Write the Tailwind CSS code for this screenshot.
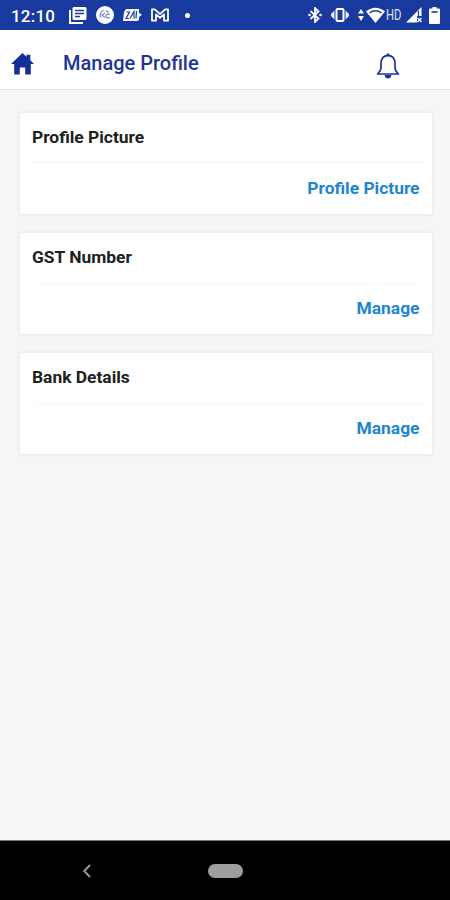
<!DOCTYPE html>
<html lang="en">
<head>
<meta charset="utf-8">
<title>Manage Profile</title>
<script src="https://cdn.jsdelivr.net/npm/@tailwindcss/browser@4"></script>
</head>
<body class="flex h-[900px] w-[450px] flex-col overflow-hidden bg-[#f6f6f6] font-[Roboto,sans-serif]">
<div class="flex h-[30px] shrink-0 items-center bg-[#183a9f] pl-[11px] pr-[10px] text-white">
  <span class="w-[58px] whitespace-nowrap text-[17px] font-medium leading-[30px] tracking-[0.2px] pt-[2px]">12:10</span>
  <svg class="h-[18px] w-[18px]" viewBox="0 0 18 18"><path d="M1 4v13h13" fill="none" stroke="#fff" stroke-width="2"/><rect x="3.5" y="1" width="14" height="13" rx="1.5" fill="#fff"/><path d="M6 4.5h9M6 7.5h9M6 10.5h5" stroke="#183a9f" stroke-width="1.6"/></svg>
  <svg class="ml-[9px] h-[18px] w-[18px]" viewBox="0 0 18 18"><circle cx="9" cy="9" r="9" fill="#fff"/><path d="M8 4.500a4.500 4.500 0 0 0-3 7M9 7l-3 2 3 2.500M10 4.500l3 2M14 8.500q-4-1-4 1.500t4 1.500" fill="none" stroke="#7188c8" stroke-width="1.200"/></svg>
  <svg class="ml-[9px] h-[14px] w-[19px]" viewBox="0 0 19 14"><path d="M3 1h13v4l3 1.500-3 2.500v3l-2 1H0L1 4z" fill="#fff"/><path d="M3.500 4h3L3 10.500h3M7 10.500 11 3.500v7M13.500 3l-.5 7.500" fill="none" stroke="#183a9f" stroke-width="1.200"/></svg>
  <svg class="ml-[9px] h-[14px] w-[18px]" viewBox="0 0 18 14"><path d="M1 12.700V1.300h2.500L9 6l5.500-4.700H17v11.400h-4V6.500l-4 3.300-4-3.300v6.200z" fill="none" stroke="#fff" stroke-width="1.800" stroke-linejoin="round"/></svg>
  <span class="ml-[16px] h-[5px] w-[5px] rounded-full bg-white"></span>
  <div class="ml-auto flex items-center">
    <svg class="h-[16px] w-[14px]" viewBox="0 0 14 16"><path d="m2.500 4 8 7.500L7 15V1l3.500 3.500-8 7.500" fill="none" stroke="#fff" stroke-width="1.800"/><circle cx="1.500" cy="8" r="1.300" fill="#fff"/><circle cx="12.500" cy="8" r="1.300" fill="#fff"/></svg>
    <svg class="ml-[9px] h-[14px] w-[18px]" viewBox="0 0 18 14"><path d="M3.500 2.500v9L0 8V6zM14.500 2.500v9L18 8V6z" fill="#fff" opacity=".9"/><rect x="5.500" y="1" width="7" height="12" rx="1" fill="none" stroke="#fff" stroke-width="2"/></svg>
    <svg class="ml-[9px] h-[14px] w-[6px]" viewBox="0 0 6 14"><path d="M3 1l3 4.500H0zM3 13 0 8h6z" fill="#fff"/></svg>
    <svg class="ml-[2px] h-[16px] w-[19px]" viewBox="0 0 19 16"><path d="M0 4.500Q9.500-3 19 4.500L9.500 16z" fill="#fff"/><path d="M3.500 5.800q6-4 12 0" fill="none" stroke="#183a9f" stroke-width="1.400"/></svg>
    <span class="ml-[1px] w-[16px] whitespace-nowrap text-[15px] leading-[16px] text-white/85"><span class="inline-block origin-left scale-x-75">HD</span></span>
    <svg class="ml-[4px] h-[16px] w-[16px]" viewBox="0 0 16 16"><path d="M15.500 0v9H11v6.500H0z" fill="#fff"/><path d="M12.500 4v5" stroke="#183a9f" stroke-width="1.200"/><path d="m11.500 11 4 4m0-4-4 4" stroke="#fff" stroke-width="1.300"/></svg>
    <svg class="ml-[7px] h-[17px] w-[11px]" viewBox="0 0 11 17"><path d="M3.500 0h4v1.500H10q1 0 1 1V16q0 1-1 1H1q-1 0-1-1V2.500q0-1 1-1h2.500z" fill="#fff"/><path d="M2.500 4h6v2h-6z" fill="#183a9f" opacity=".8"/></svg>
  </div>
</div>
<header class="flex h-[60px] shrink-0 items-center border-b border-[#e4e4e4] bg-white pl-[11px] pr-[50px] pt-[8px]">
  <svg class="h-[22px] w-[23px]" viewBox="0 0 23 22"><path d="M11.500 0 15.500 3.700V1.800h3.800v5.400L23 11h-3.200v10.500h-5.600v-7H8.800v7H3.200V11H0z" fill="#152f9a"/></svg>
  <h1 class="ml-[29px] -mt-[1px] text-[20px] font-medium leading-6 text-[#1e3596]">Manage Profile</h1>
  <svg class="ml-auto mt-[5px] h-[26px] w-[24px]" viewBox="0 0 24 26"><path d="M12 2.300C7.500 2.700 5 6 5 10.500v4.500c0 3-1.500 4-3.500 6h21c-2-2-3.500-3-3.500-6v-4.500C19 6 16.500 2.700 12 2.300z" fill="none" stroke="#1c319b" stroke-width="1.700" stroke-linejoin="round"/><circle cx="12" cy="1.700" r="1.500" fill="#1c319b"/><path d="M8.500 22h7q-.8 3.500-3.500 3.500T8.500 22z" fill="#1c319b"/></svg>
</header>
<main class="flex flex-1 flex-col gap-[19px] pl-[20px] pr-[18.500px] pt-[23px]">
  <section class="flex h-[101px] flex-col bg-white shadow-[0_0_5px_rgba(0,0,0,0.08)]">
    <h2 class="h-[49px] pl-[12px] text-[17.4px] font-bold leading-[49px] text-[#202020]">Profile Picture</h2>
    <hr class="ml-[9px] mr-[7px] border-[#f3f3f3]">
    <a class="block pr-[12px] text-right text-[17.4px] font-bold leading-[51px] text-[#2085cd]">Profile Picture</a>
  </section>
  <section class="flex h-[101px] flex-col bg-white shadow-[0_0_5px_rgba(0,0,0,0.08)]">
    <h2 class="h-[50px] pl-[12px] text-[17.4px] font-bold leading-[49px] text-[#202020]">GST Number</h2>
    <hr class="ml-[17px] mr-[13px] border-[#f6f6f6]">
    <a class="block pr-[12px] text-right text-[17.4px] font-bold leading-[49px] text-[#2085cd]">Manage</a>
  </section>
  <section class="flex h-[101px] flex-col bg-white shadow-[0_0_5px_rgba(0,0,0,0.08)]">
    <h2 class="h-[50px] pl-[12px] text-[17.4px] font-bold leading-[49px] text-[#202020]">Bank Details</h2>
    <hr class="ml-[15px] mr-[9px] border-[#f6f6f6]">
    <a class="block pr-[12px] text-right text-[17.4px] font-bold leading-[49px] text-[#2085cd]">Manage</a>
  </section>
</main>
<nav class="flex h-[60px] shrink-0 items-center border-t border-[#777] bg-black pl-[82px]">
  <svg class="h-[14px] w-[10px]" viewBox="0 0 10 14"><path d="M8 1 2.200 7 8 13" fill="none" stroke="#999" stroke-width="1.900"/></svg>
  <span class="ml-[116px] h-[14px] w-[35px] rounded-full bg-[#9e9e9e]"></span>
</nav>
</body>
</html>
